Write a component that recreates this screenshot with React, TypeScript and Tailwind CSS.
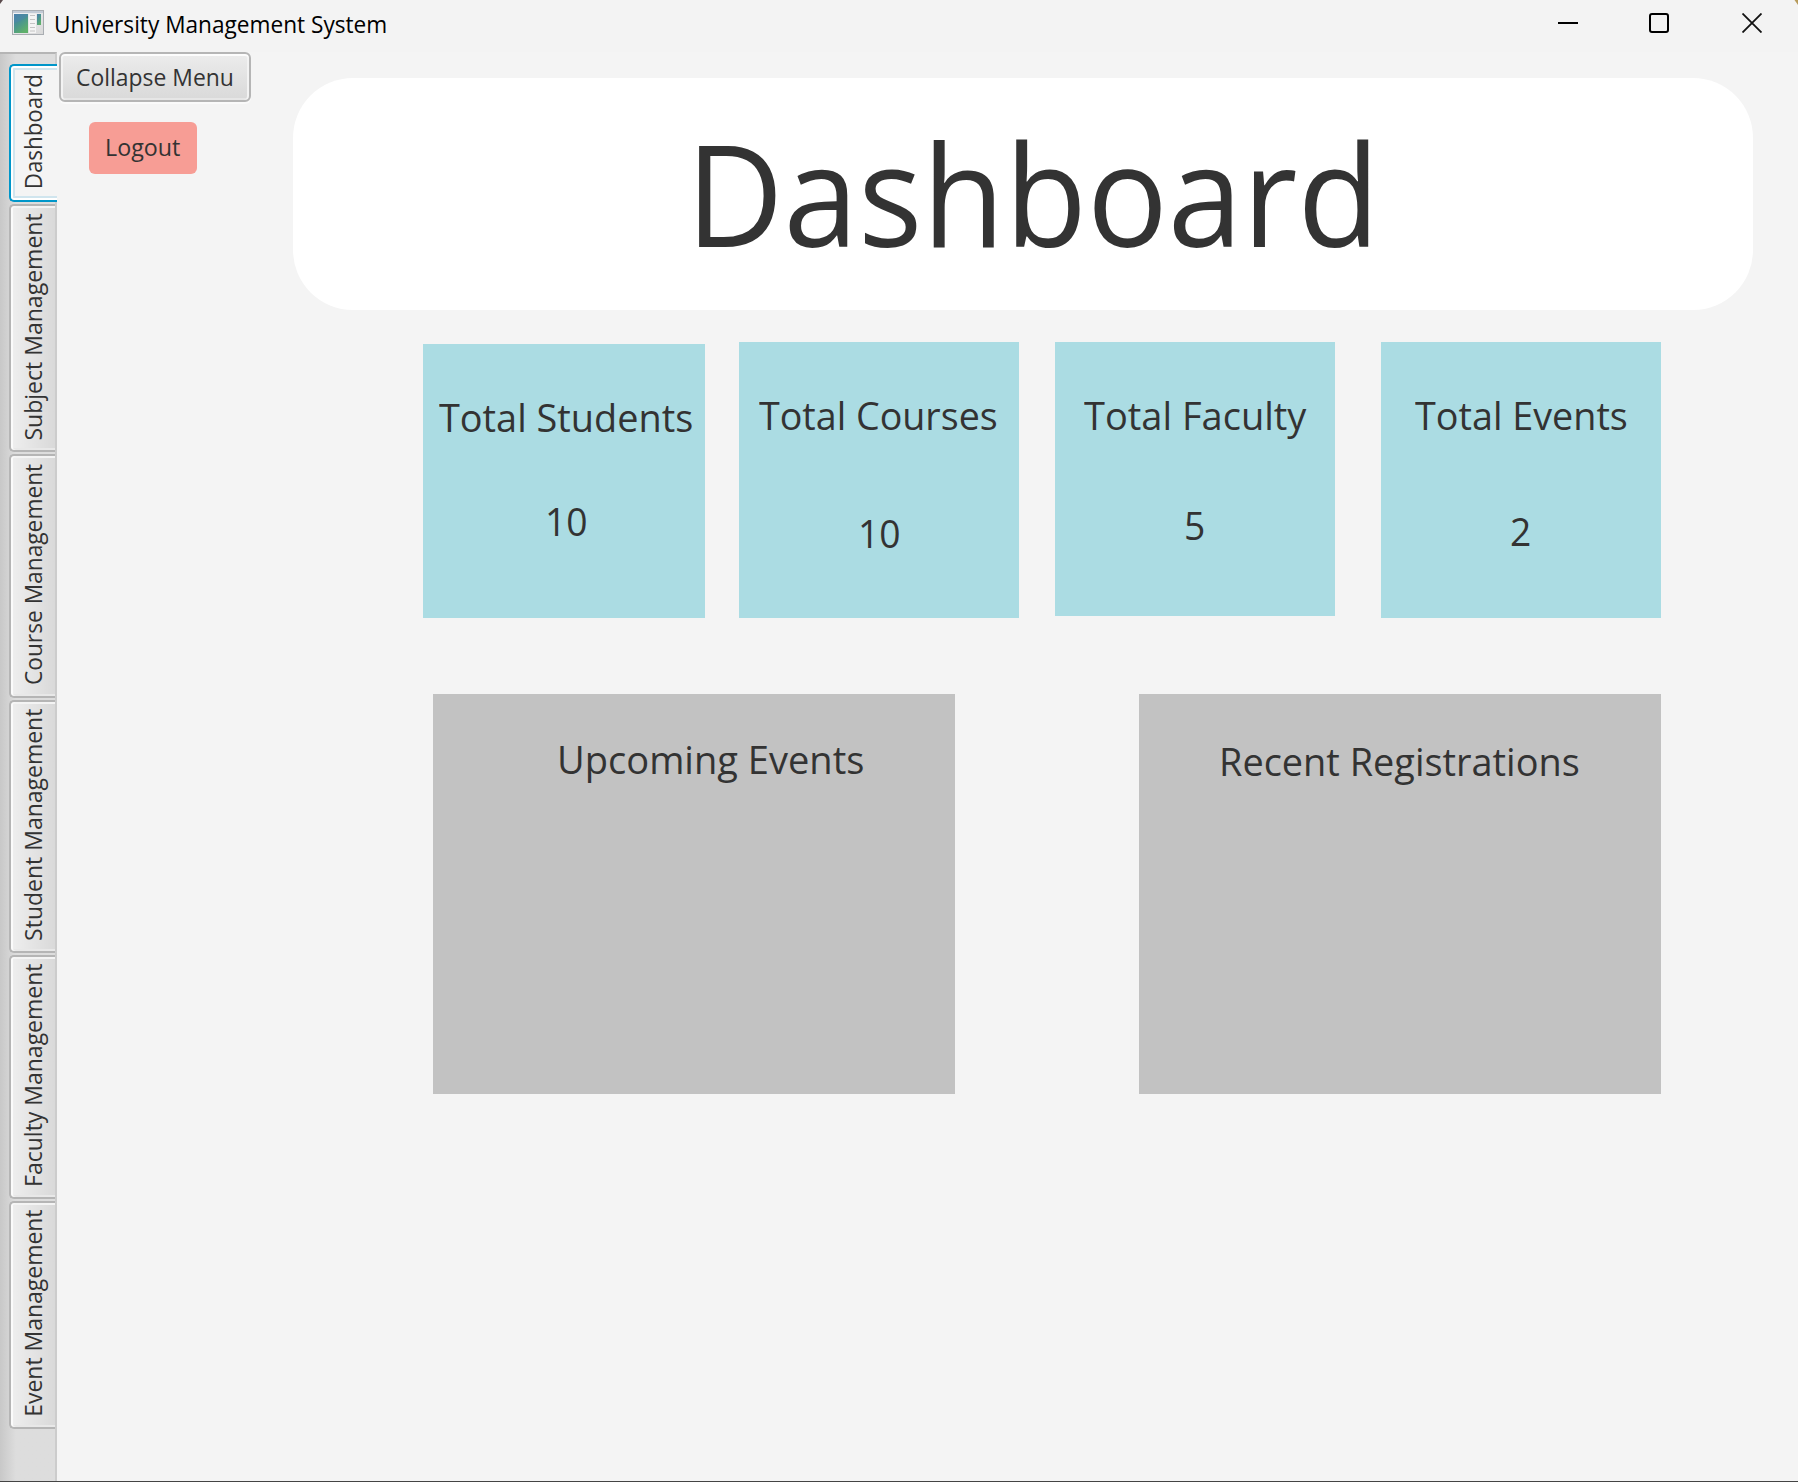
const tabs = [
  { label: "Dashboard", box: "h-[138px]", text: "scale-y-[0.95]", active: true },
  { label: "Subject Management", box: "h-[248px]", text: "scale-y-[0.98]" },
  { label: "Course Management", box: "h-[244px]", text: "scale-y-[0.967]" },
  { label: "Student Management", box: "h-[253px]", text: "scale-y-[0.978]" },
  { label: "Faculty Management", box: "h-[244px]", text: "scale-y-[0.978]" },
  { label: "Event Management", box: "h-[228px]", text: "scale-y-[0.977]" },
];

const stats = [
  {
    label: "Total Students",
    value: "10",
    box: "mt-[2px] w-[282px] h-[274px]",
    labelPos: "ml-[15.5px] scale-x-[0.966]",
    valuePos: "mt-[51px] ml-[122px]",
  },
  {
    label: "Total Courses",
    value: "10",
    box: "ml-[34px] w-[280px] h-[276px]",
    labelPos: "ml-[20px] scale-x-[0.96]",
    valuePos: "mt-[65px] ml-[119px]",
  },
  {
    label: "Total Faculty",
    value: "5",
    box: "ml-[36px] w-[280px] h-[274px]",
    labelPos: "ml-[29px] scale-x-[0.97]",
    valuePos: "mt-[57px] ml-[129px]",
  },
  {
    label: "Total Events",
    value: "2",
    box: "ml-[46px] w-[280px] h-[276px]",
    labelPos: "ml-[34px] scale-x-[0.963]",
    valuePos: "mt-[63px] ml-[128.5px]",
  },
];

function AppIcon() {
  return (
    <svg width="32" height="25" viewBox="0 0 32 25" className="block">
      <defs>
        <linearGradient id="pane" x1="0" y1="0" x2="0.6" y2="1">
          <stop offset="0" stopColor="#4a7ba8" />
          <stop offset="0.5" stopColor="#4a9490" />
          <stop offset="1" stopColor="#5fb06a" />
        </linearGradient>
        <linearGradient id="frame" x1="0" y1="0" x2="1" y2="1">
          <stop offset="0" stopColor="#f5f6f8" />
          <stop offset="1" stopColor="#d8d8d8" />
        </linearGradient>
      </defs>
      <rect x="0.5" y="0.5" width="31" height="24" fill="url(#frame)" stroke="#a9adb2" />
      <path d="M1 2H31" stroke="#c3cbd6" strokeWidth="2" />
      <rect x="2" y="4" width="14" height="19" fill="url(#pane)" />
      <path d="M2 13C7 12 12 9 16 6V4H2Z" fill="#4c86ad" opacity="0.5" />
      <rect x="17" y="4" width="7" height="19" fill="#f4f4f4" />
      <path d="M18 5.5h5M18 9.5h5M18 13.5h5M18 17.5h5M18 21h5" stroke="#c4c4c4" />
      <rect x="25" y="4" width="4" height="11" fill="url(#pane)" />
    </svg>
  );
}

function TitleBar() {
  return (
    <header className="relative flex h-[52px] bg-[#f3f3f3] text-black">
      <svg width="5" height="5" className="absolute left-0 top-0">
        <path d="M0 0H3L0 4Z" fill="#5a4a4c" />
      </svg>
      <svg width="5" height="6" className="absolute right-0 top-0">
        <path d="M1.5 0H5V5Z" fill="#b79b5b" />
      </svg>
      <div className="ml-3 mt-[10px]">
        <AppIcon />
      </div>
      <span className="ml-[10px] mt-2 origin-left scale-x-[0.963] whitespace-nowrap leading-8">
        University Management System
      </span>
      <div className="ml-auto mr-9 mt-[13px] flex gap-[71px]">
        <svg width="20" height="20">
          <path d="M0 10H20" stroke="#000" strokeWidth="2" />
        </svg>
        <svg width="20" height="20">
          <rect x="1" y="1" width="18" height="18" rx="2" fill="none" stroke="#000" strokeWidth="2" />
        </svg>
        <svg width="20" height="20" className="ml-[2px]">
          <path d="M0.5 0.5L19.5 19.5M19.5 0.5L0.5 19.5" stroke="#111" strokeWidth="1.8" />
        </svg>
      </div>
    </header>
  );
}

function TabStrip() {
  return (
    <nav className="flex w-[57px] flex-col gap-[2px] border-r-2 border-t-2 border-r-[#cccccc] border-t-[#b5b5b5] bg-linear-to-r from-[#c8c8c8] to-[#dddddd] to-[16px] pl-[9px] pt-[10px]">
      {tabs.map((t) => (
        <div
          key={t.label}
          className={`flex shrink-0 items-center rounded-l-[5px] border-2 border-r-0 ${t.box} ${
            t.active
              ? "-mr-[2px] border-[#0096c9] bg-[#f4f4f4] shadow-[inset_2px_0_0_#fff,inset_0_2px_0_#fff,inset_0_-2px_0_#fff,inset_4px_0_0_#d0e5ee,inset_0_4px_0_#d0e5ee,inset_0_-4px_0_#d0e5ee]"
              : "border-[#b5b5b5] bg-linear-to-r from-[#efefef] to-[#d9d9d9] shadow-[inset_2px_0_0_#fbfbfb,inset_0_2px_0_#f4f4f4,inset_0_-2px_0_#e8e8e8]"
          }`}
        >
          <span
            className={`mb-[3px] ml-[6px] rotate-180 whitespace-nowrap leading-8 [writing-mode:vertical-rl] ${t.text}`}
          >
            {t.label}
          </span>
        </div>
      ))}
    </nav>
  );
}

function SideActions() {
  return (
    <aside className="flex w-[236px] shrink-0 flex-col items-start">
      <button className="ml-[2px] h-[50px] w-[192px] rounded-[6px] border-2 border-[#b5b5b5] bg-linear-to-b from-[#ececec] to-[#d9d9d9] pl-[15px] text-left shadow-[inset_0_2px_0_#fcfcfc,inset_2px_0_0_#f3f3f3,inset_-2px_0_0_#f3f3f3,inset_0_-2px_0_#e6e6e6,0_2px_0_#fafafa]">
        <span className="block origin-left scale-x-[0.975] whitespace-nowrap leading-8">Collapse Menu</span>
      </button>
      <button className="ml-8 mt-5 h-[52px] w-[108px] rounded-[6px] bg-[#f79d95] pb-[2px] pl-4 text-left leading-8">
        <span className="block origin-left scale-x-[0.99]">Logout</span>
      </button>
    </aside>
  );
}

export default function App() {
  return (
    <div className="flex h-[1482px] w-[1798px] flex-col overflow-hidden border-b border-[#444444] bg-[#f4f4f4] font-['Open_Sans','Noto_Sans',sans-serif] text-[23.5px] text-[#333333]">
      <TitleBar />
      <div className="flex min-h-0 flex-1">
        <TabStrip />
        <SideActions />
        <main className="pt-[26px]">
          <section className="h-[232px] w-[1460px] rounded-[60px] bg-white pt-[18px]">
            <h1 className="ml-[393px] w-fit origin-left scale-x-[0.95] text-[141.5px] leading-[192px]">
              Dashboard
            </h1>
          </section>

          <section className="ml-[130px] mt-8 flex h-[276px] items-start">
            {stats.map((s) => (
              <div key={s.label} className={`flex flex-col items-start bg-[#abdce3] pt-[46px] text-[39.2px] leading-[53px] ${s.box}`}>
                <span className={`origin-left whitespace-nowrap ${s.labelPos}`}>{s.label}</span>
                <span className={`origin-left scale-x-[0.95] ${s.valuePos}`}>{s.value}</span>
              </div>
            ))}
          </section>

          <section className="ml-[140px] mt-[76px] flex text-[39.2px] leading-[53px]">
            <div className="h-[400px] w-[522px] bg-[#c2c2c2] pt-[38px]">
              <h2 className="ml-[123.5px] w-fit origin-left scale-x-[0.971] whitespace-nowrap">Upcoming Events</h2>
            </div>
            <div className="ml-[184px] h-[400px] w-[522px] bg-[#c2c2c2] pt-[40px]">
              <h2 className="ml-[80px] w-fit origin-left scale-x-[0.967] whitespace-nowrap">
                Recent Registrations
              </h2>
            </div>
          </section>
        </main>
      </div>
    </div>
  );
}
